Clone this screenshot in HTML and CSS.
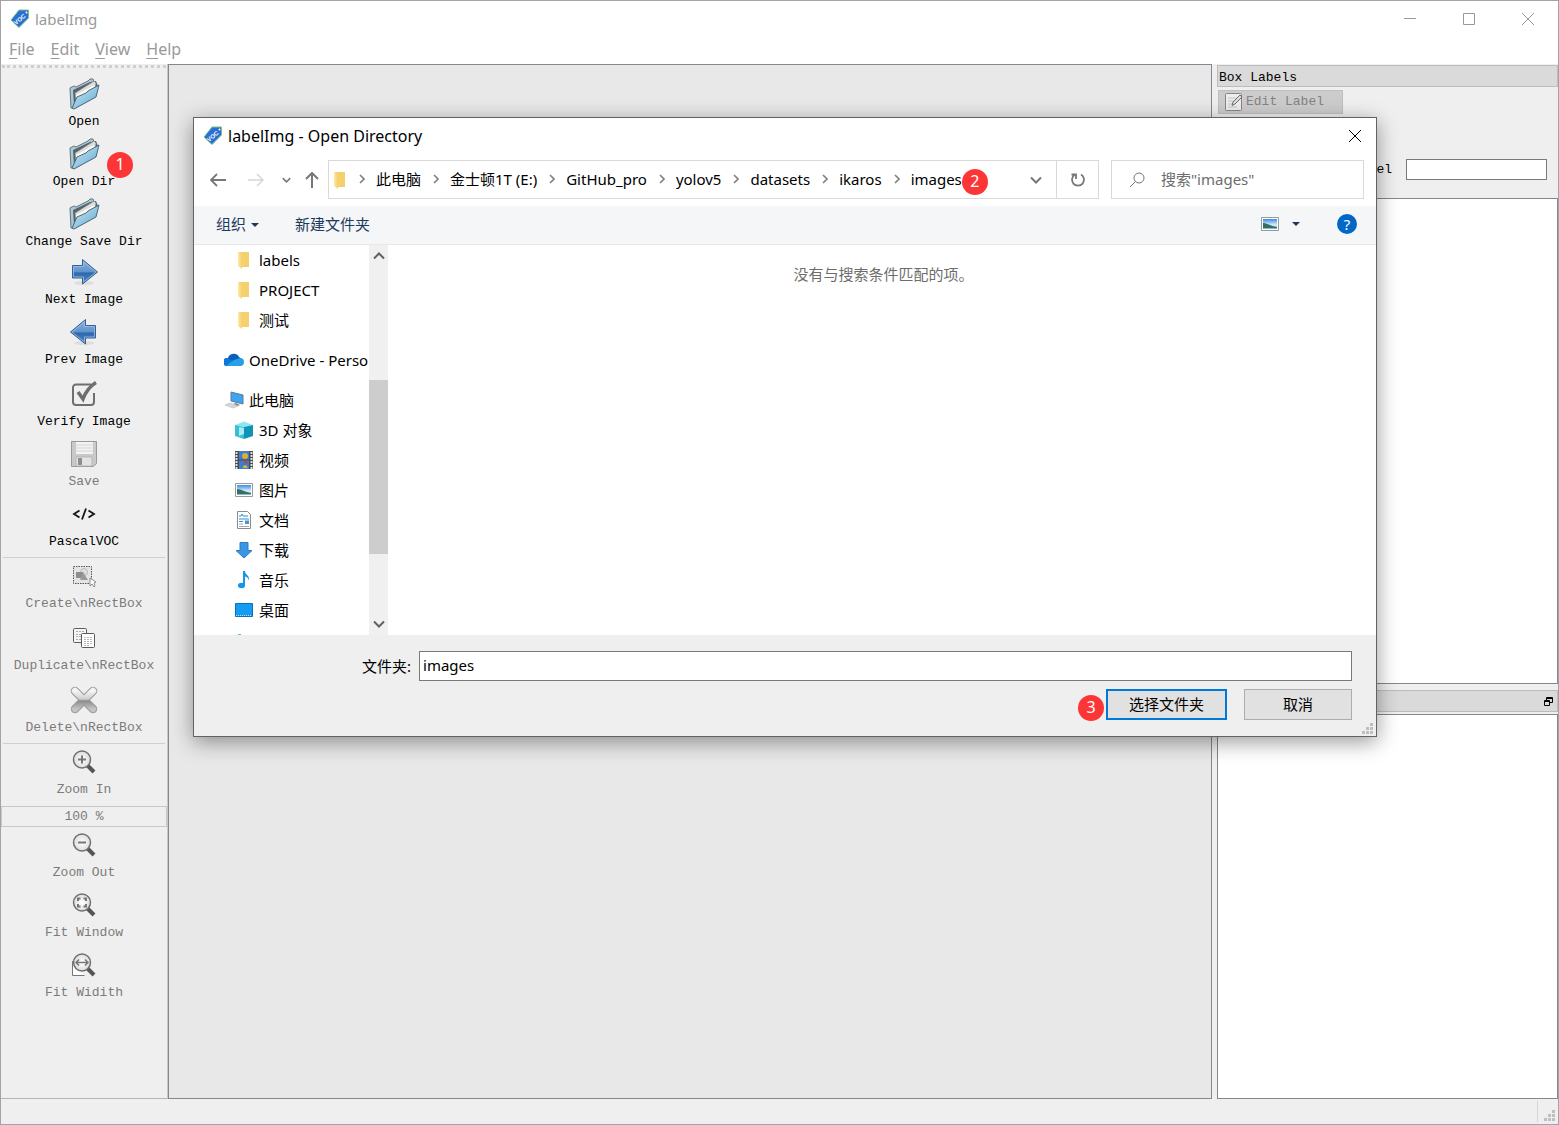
FILE: index.html
```html
<!DOCTYPE html>
<html lang="zh-CN">
<head>
<meta charset="utf-8">
<title>labelImg</title>
<link rel="stylesheet" href="styles.css">
</head>
<body>
<svg class="defs" aria-hidden="true">
  <defs>
    <linearGradient id="gBlue" x1="0" y1="0" x2="0" y2="1"><stop offset="0" stop-color="#8fb3dc"/><stop offset=".5" stop-color="#5f93cc"/><stop offset=".55" stop-color="#2e68ad"/><stop offset="1" stop-color="#4f8bc9"/></linearGradient>
    <linearGradient id="gFolder" x1="0" y1="0" x2="1" y2="1"><stop offset="0" stop-color="#d5eaf5"/><stop offset=".6" stop-color="#8cc3df"/><stop offset="1" stop-color="#5c9dc0"/></linearGradient>
    <linearGradient id="gGray" x1="0" y1="0" x2="0" y2="1"><stop offset="0" stop-color="#f4f4f4"/><stop offset=".45" stop-color="#cfcfcf"/><stop offset=".55" stop-color="#8c8c8c"/><stop offset="1" stop-color="#c4c4c4"/></linearGradient>
    <linearGradient id="gSky" x1="0" y1="0" x2="0" y2="1"><stop offset="0" stop-color="#3f8ae0"/><stop offset=".6" stop-color="#d9effb"/><stop offset="1" stop-color="#7fb0cc"/></linearGradient>
    <linearGradient id="gYellow" x1="0" y1="0" x2="1" y2="0"><stop offset="0" stop-color="#ffe9a6"/><stop offset="1" stop-color="#f5ce6a"/></linearGradient>
    <radialGradient id="gLens"><stop offset="0" stop-color="#fff"/><stop offset="1" stop-color="#dcdcdc"/></radialGradient>
    <symbol id="logo" viewBox="0 0 20 20"><path d="M9 1h9.500v8L9 18.500 1 11z" fill="#2a6fd2" stroke="#7fc08a" stroke-width="1"/><circle cx="16.500" cy="3.500" r="1" fill="#fff"/><text x="9.500" y="12.500" font-family="Liberation Sans, sans-serif" font-size="6" font-weight="700" fill="#fff" text-anchor="middle" transform="rotate(-40 9.500 10)">VOC</text></symbol>
    <symbol id="folder3d" viewBox="0 0 32 32"><path d="M2 10l4-2 2 1L20 3l2-2h3l1 3-2 8L6 30H3z" fill="#a9cbdc" stroke="#66757d"/><path d="M5 12L22 4l6-1 2 5-8 8L6 28z" fill="#596268"/><path d="M7 15L26 3l2 2-1 9L8 26z" fill="#dcdcda" stroke="#777" stroke-width=".6"/><path d="M8 17l18-10 1 3-18 14z" fill="#f9f9f7"/><path d="M4 30l5-11 9-4 2-2 11-6-3 12L6 31z" fill="url(#gFolder)" stroke="#48687a"/></symbol>
    <symbol id="next" viewBox="0 0 32 32"><ellipse cx="16" cy="27" rx="10" ry="2" fill="#dedede"/><path d="M4.500 9.500h10v-6L29.500 16l-15 12v-6h-10z" fill="url(#gBlue)" stroke="#345f96"/><path d="M5.500 10.500h10V6L28 16l-12.500 10v-5h-10z" fill="none" stroke="#9dbfe3" stroke-width=".8"/></symbol>
    <symbol id="verify" viewBox="0 0 32 32"><path d="M23 6.500H8a3 3 0 0 0-3 3V24a3 3 0 0 0 3 3h15a3 3 0 0 0 3-3v-9" fill="none" stroke="#6e6e6e" stroke-width="2"/><path d="M10 14l5 7Q19 10 28 4.500" fill="none" stroke="#6e6e6e" stroke-width="3.500"/></symbol>
    <symbol id="save" viewBox="0 0 32 32"><path d="M3.500 3.500h25v22l-3 3H3.500z" fill="#c9c9c9" stroke="#9a9a9a"/><path d="M8 4h17v12H8z" fill="#f3f3f3"/><path d="M8 7h17M8 10h17M8 13h17" stroke="#d5d5d5"/><path d="M8 19h16v9H8z" fill="#e3e3e3" stroke="#aaa" stroke-width=".7"/><path d="M10 20h4v7h-4z" fill="#8e8e8e"/></symbol>
    <symbol id="code" viewBox="0 0 32 32"><path d="M11.500 12.500L6 16l5.500 3.500M20.500 12.500L26 16l-5.500 3.500M18 10.500l-4 11" fill="none" stroke="#151515" stroke-width="1.800"/></symbol>
    <symbol id="create" viewBox="0 0 32 32"><path d="M5.500 6.500h18v17h-18z" fill="#e4e4e4" stroke="#555" stroke-dasharray="1.500 1"/><circle cx="16" cy="12" r="3.500" fill="#ddd" stroke="#bbb"/><path d="M8 12h7v6H8z" fill="#8d8d8d"/><path d="M15 12l5 8h-8z" fill="#999"/><path d="M22 18v8l2-2 2 3 1-1-1-3 2-1z" fill="#fff" stroke="#777" stroke-width=".8"/></symbol>
    <symbol id="dup" viewBox="0 0 32 32"><rect x="5.500" y="6.500" width="13" height="14" rx="1" fill="#f5f5f5" stroke="#5c5c5c"/><path d="M8 9.500h8M8 12.500h5M8 14.500h5M8 17.500h5" stroke="#aaa" stroke-dasharray="2 1"/><rect x="13.500" y="11.500" width="13" height="14" rx="1" fill="#fff" stroke="#5a5a5a"/><path d="M16 15.500h8M16 17.500h8M16 19.500h8M16 21.500h8M16 23.500h5" stroke="#bbb" stroke-dasharray="2 1"/></symbol>
    <symbol id="del" viewBox="0 0 32 32"><path d="M7 7l18 18M25 7L7 25" fill="none" stroke="#999" stroke-width="8.500" stroke-linecap="round"/><path d="M7 7l18 18M25 7L7 25" fill="none" stroke="url(#gGray)" stroke-width="6.500" stroke-linecap="round"/></symbol>
    <symbol id="lens" viewBox="0 0 32 32"><path d="M19 19l7 7" stroke="#555" stroke-width="4"/><circle cx="14" cy="13.500" r="8.500" fill="url(#gLens)" stroke="#707070" stroke-width="1.500"/></symbol>
    <symbol id="edit" viewBox="0 0 20 20"><rect x="1.500" y="1.500" width="16" height="17" rx="1" fill="#ededed" stroke="#858585"/><path d="M4 6h8M4 9h7M4 12h5M4 15h9" stroke="#c4c4c4"/><path d="M8 13.500L9 10l7-7 2 2-7 7z" fill="#ddd" stroke="#6d6d6d"/></symbol>
    <symbol id="folder" viewBox="0 0 14 18"><path d="M2 1h10v15H2z" fill="#f5d06e"/><path d="M1 1l4 2v15l-4-3z" fill="url(#gYellow)"/></symbol>
    <symbol id="cloud" viewBox="0 0 20 14"><path d="M4 13a4 4 0 0 1 0-8 6 6 0 0 1 11-1 5 5 0 0 1 1 9z" fill="#0a5fb8"/><path d="M3 5l7 3-7 5a4 4 0 0 1 0-8z" fill="#0f78d4"/><path d="M3 12l7-5 6-2a4 4 0 0 1 0 8H4z" fill="#28a0e8"/></symbol>
    <symbol id="pc" viewBox="0 0 20 18"><path d="M7 1l12 3v9L7 10z" fill="#3da5f0" stroke="#5b7c94"/><path d="M12 12l4 2-2 1-5-2z" fill="#888"/><path d="M1 14l5-2 8 3-5 2z" fill="#d3d8dc" stroke="#aab" stroke-width=".5"/></symbol>
    <symbol id="cube" viewBox="0 0 18 18"><path d="M0 4l9-3.500L18 4 9 6z" fill="#8ee6ee"/><path d="M0 4l9 2v12l-9-3z" fill="#36bfd2"/><path d="M18 4L9 6v12l9-3z" fill="#0e94b4"/><path d="M4 6l5 1v6l-5 2z" fill="#a5edf2"/></symbol>
    <symbol id="film" viewBox="0 0 18 18"><path d="M0 0h18v18H0z" fill="#4b4b4b"/><path d="M1.500 1v17M16.500 1v17" stroke="#ddd" stroke-width="2" stroke-dasharray="2 1"/><path d="M4 0h10v8.500H4zM4 9.500h10V18H4z" fill="#3d7cd6"/><circle cx="10" cy="5" r="3" fill="#d9b22c"/><path d="M10 10l3 1-2 2zM7 9h3v3z" fill="#d23b2a"/><path d="M8 15l3-1 2 3H8z" fill="#e3b31e"/></symbol>
    <symbol id="pic" viewBox="0 0 18 14"><path d="M.5.5h17v13H.5z" fill="#fff" stroke="#999"/><path d="M2 2h14v10H2z" fill="url(#gSky)"/><path d="M2 6c4 0 8 3 14 4v1H2z" fill="#33705f"/></symbol>
    <symbol id="doc" viewBox="0 0 18 18"><path d="M2.500.5h10l3 3v14h-13z" fill="#fff" stroke="#8b8b8b"/><path d="M4 8h10M4 10.500h4M4 5h2l1-2 1 2h5" stroke="#2f8fd6" fill="none"/><path d="M4 13h4M4 15.500h10" stroke="#aaa"/><path d="M10 9.500h4v3.500h-4z" fill="#4c92c9"/></symbol>
    <symbol id="down" viewBox="0 0 18 18"><path d="M5 1.500h8v8h4L9 17 1 9.500h4z" fill="#3b97e3" stroke="#2a7bc4"/></symbol>
    <symbol id="music" viewBox="0 0 18 18"><ellipse cx="6.500" cy="14.500" rx="3.500" ry="2.700" fill="#1596ea"/><path d="M8 0h2c0 4 5 4 4 10-.5-3-2-4-4-4.500V14H8z" fill="#1596ea"/></symbol>
    <symbol id="desk" viewBox="0 0 18 14"><path d="M.5.5h17v13H.5z" fill="#149cf3" stroke="#0c6fb4"/><path d="M1 12.500h16" stroke="#b9e2fb" stroke-dasharray="1 1"/></symbol>
    <symbol id="drive" viewBox="0 0 18 18"><path d="M3 3h3v3H3z" fill="#3fc4ea"/><path d="M1 8h16v5H1z" fill="#999"/></symbol>
    <symbol id="sep" viewBox="0 0 6 10"><path d="M1 1l4 4-4 4" fill="none" stroke="#808080" stroke-width="1.600"/></symbol>
    <symbol id="chevdown" viewBox="0 0 12 8"><path d="M1 1.500l5 5 5-5" fill="none" stroke="currentColor" stroke-width="2"/></symbol>
    <symbol id="grip" viewBox="0 0 12 12"><path d="M8 0h3v3H8zM4 4h3v3H4zM8 4h3v3H8zM0 8h3v3H0zM4 8h3v3H4zM8 8h3v3H8z" fill="#bfbfbf"/></symbol>
    <symbol id="cross" viewBox="0 0 14 14"><path d="M1 1l12 12M13 1L1 13" fill="none" stroke="currentColor"/></symbol>
  </defs>
</svg>

<div class="window">
  <header class="titlebar">
    <svg class="logo"><use href="#logo"/></svg>
    <span class="title">labelImg</span>
    <div class="caption">
      <button aria-label="Minimize"><svg width="14" height="14"><path d="M1 6.500h12" stroke="currentColor"/></svg></button>
      <button aria-label="Maximize"><svg width="14" height="14"><path d="M1.500 1.500h11v11h-11z" fill="none" stroke="currentColor"/></svg></button>
      <button aria-label="Close"><svg width="14" height="14"><use href="#cross"/></svg></button>
    </div>
  </header>
  <nav class="menubar">
    <button><u>F</u>ile</button><button><u>E</u>dit</button><button><u>V</u>iew</button><button><u>H</u>elp</button>
  </nav>

  <main class="workspace">
    <div class="toolbar">
      <div class="toolgrip"></div>
      <button class="tool"><svg><use href="#folder3d"/></svg>Open</button>
      <button class="tool"><svg><use href="#folder3d"/></svg>Open Dir<span class="badge badge-tool">1</span></button>
      <button class="tool"><svg><use href="#folder3d"/></svg>Change Save Dir</button>
      <button class="tool low"><svg><use href="#next"/></svg>Next Image</button>
      <button class="tool"><svg class="flip"><use href="#next"/></svg>Prev Image</button>
      <button class="tool high"><svg><use href="#verify"/></svg>Verify Image</button>
      <button class="tool" disabled><svg><use href="#save"/></svg>Save</button>
      <button class="tool"><svg><use href="#code"/></svg>PascalVOC</button>
      <hr>
      <button class="tool tight" disabled><svg><use href="#create"/></svg>Create\nRectBox</button>
      <button class="tool high" disabled><svg><use href="#dup"/></svg>Duplicate\nRectBox</button>
      <button class="tool high" disabled><svg><use href="#del"/></svg>Delete\nRectBox</button>
      <hr>
      <button class="tool tight" disabled><svg><use href="#lens"/><path d="M10 13.500h8M14 9.500v8" stroke="#777" stroke-width="2"/></svg>Zoom In</button>
      <input class="zoom" value="100 %" aria-label="Zoom" disabled>
      <button class="tool tight" disabled><svg><use href="#lens"/><path d="M10 13.500h8" stroke="#777" stroke-width="2"/></svg>Zoom Out</button>
      <button class="tool" disabled><svg><use href="#lens"/><path d="M10 12v-2.500h2.500M15.500 9.500H18V12M18 15v2.500h-2.500M12.500 17.500H10V15" fill="none" stroke="#777" stroke-width="2"/></svg>Fit Window</button>
      <button class="tool" disabled><svg><path d="M4.500 12v14.500h12" fill="#fff" stroke="#777"/><use href="#lens"/><path d="M8 13.500h12M11 10.500l-3 3 3 3M17 10.500l3 3-3 3" fill="none" stroke="#777" stroke-width="1.500"/></svg>Fit Widith</button>
    </div>
    <section class="canvas" aria-label="Canvas"></section>
    <aside class="docks">
      <h2 class="dockhead">Box Labels</h2>
      <div class="labeltools">
        <button class="editlabel" disabled><svg width="20" height="20"><use href="#edit"/></svg>Edit Label</button>
        <div class="defaultlabel">
          <label><input type="checkbox">Use default label</label>
          <input type="text" class="labelbox" aria-label="Default label">
        </div>
      </div>
      <div class="list boxlist"></div>
      <div class="dockhead filehead"><button aria-label="Float"><svg width="9" height="9"><path d="M2.500 3V.5h6v5H6M3 1.500h5M.5 3.500h5v5h-5zM1 4.500h4" fill="none" stroke="#000"/></svg></button></div>
      <div class="list filelist"></div>
    </aside>
  </main>
  <footer class="statusbar"><svg width="12" height="12"><use href="#grip"/></svg></footer>

  <section class="dialog" role="dialog" aria-label="labelImg - Open Directory">
    <header class="dlgtitle">
      <svg class="logo"><use href="#logo"/></svg><span>labelImg - Open Directory</span>
      <button aria-label="Close"><svg width="14" height="14"><use href="#cross"/></svg></button>
    </header>
    <div class="address">
      <div class="history">
        <button aria-label="Back"><svg width="16" height="14"><path d="M1 7h15M7 1L1 7l6 6" fill="none" stroke="#777" stroke-width="1.800"/></svg></button>
        <button aria-label="Forward"><svg width="16" height="14"><path d="M0 7h15M9 1l6 6-6 6" fill="none" stroke="#d6d6d6" stroke-width="1.500"/></svg></button>
        <button aria-label="Recent" class="gray"><svg width="9" height="6"><use href="#chevdown"/></svg></button>
        <button aria-label="Up"><svg width="14" height="16"><path d="M7 16V1M1 7l6-6 6 6" fill="none" stroke="#777" stroke-width="2"/></svg></button>
      </div>
      <div class="path">
        <svg width="14" height="18"><use href="#folder"/></svg>
        <ol>
          <li><svg><use href="#sep"/></svg><a href="#">此电脑</a></li>
          <li><svg><use href="#sep"/></svg><a href="#">金士顿1T (E:)</a></li>
          <li><svg><use href="#sep"/></svg><a href="#">GitHub_pro</a></li>
          <li><svg><use href="#sep"/></svg><a href="#">yolov5</a></li>
          <li><svg><use href="#sep"/></svg><a href="#">datasets</a></li>
          <li><svg><use href="#sep"/></svg><a href="#">ikaros</a></li>
          <li><svg><use href="#sep"/></svg><a href="#">images</a><span class="badge badge-path">2</span></li>
        </ol>
        <button class="drop gray" aria-label="Previous locations"><svg width="12" height="8"><use href="#chevdown"/></svg></button>
        <button class="refresh" aria-label="Refresh"><svg width="16" height="16"><path d="M11 2.500A6 6 0 1 1 5 2.500M1.500 2.500H6V7" fill="none" stroke="#777" stroke-width="1.800"/></svg></button>
      </div>
      <label class="search">
        <svg width="16" height="16"><circle cx="10" cy="6" r="5" fill="none" stroke="#777"/><path d="M6.500 9.500L1 15" stroke="#777"/></svg>
        <input type="text" placeholder='搜索"images"' aria-label="搜索">
      </label>
    </div>
    <div class="commands">
      <button>组织<i class="tri"></i></button><button>新建文件夹</button>
      <div class="views"><button aria-label="View"><svg width="18" height="14"><use href="#pic"/></svg><i class="tri"></i></button><button class="help" aria-label="Help">?</button></div>
    </div>
    <div class="browser">
      <div class="tree">
        <ul>
          <li class="sub"><svg><use href="#folder"/></svg>labels</li>
          <li class="sub"><svg><use href="#folder"/></svg>PROJECT</li>
          <li class="sub"><svg><use href="#folder"/></svg>测试</li>
        </ul>
        <ul><li><svg class="wide"><use href="#cloud"/></svg>OneDrive - Personal</li></ul>
        <ul>
          <li><svg class="wide"><use href="#pc"/></svg>此电脑</li>
          <li class="sub"><svg><use href="#cube"/></svg>3D 对象</li>
          <li class="sub"><svg><use href="#film"/></svg>视频</li>
          <li class="sub"><svg><use href="#pic"/></svg>图片</li>
          <li class="sub"><svg><use href="#doc"/></svg>文档</li>
          <li class="sub"><svg><use href="#down"/></svg>下载</li>
          <li class="sub"><svg><use href="#music"/></svg>音乐</li>
          <li class="sub"><svg><use href="#desk"/></svg>桌面</li>
          <li class="sub"><svg><use href="#drive"/></svg>Windows (C:)</li>
        </ul>
      </div>
      <div class="scroll">
        <svg class="flipv" width="12" height="8"><use href="#chevdown"/></svg>
        <div class="thumb"></div>
        <svg width="12" height="8"><use href="#chevdown"/></svg>
      </div>
      <p class="empty">没有与搜索条件匹配的项。</p>
    </div>
    <footer class="dlgfoot">
      <div class="field"><label for="folder-name">文件夹:</label><input id="folder-name" type="text" value="images"></div>
      <div class="actions">
        <button class="primary">选择文件夹<span class="badge badge-ok">3</span></button><button class="cancel">取消</button>
      </div>
      <svg class="dlggrip" width="12" height="12"><use href="#grip"/></svg>
    </footer>
  </section>
</div>
</body>
</html>
```
FILE: styles.css
```css
* { box-sizing: border-box; }
html, body { height: 100%; }
body {
  margin: 0;
  font: 15px/20px "Noto Sans", "Noto Sans CJK SC", sans-serif;
  color: #000;
}
button, input { font: inherit; color: inherit; }
button { background: none; border: 0; padding: 0; }
input { outline: 0; border-radius: 0; }
ul, ol { list-style: none; margin: 0; padding: 0; }
a { color: inherit; text-decoration: none; }
svg { display: block; flex: none; }
.defs { position: absolute; width: 0; height: 0; }

.window {
  position: relative;
  display: flex;
  flex-direction: column;
  min-height: 100%;
  border: 1px solid #a3a3a5;
  background: #efefef;
}
.logo { width: 20px; height: 20px; }

.titlebar {
  display: flex;
  align-items: center;
  gap: 5px;
  height: 36px;
  padding: 0 23px 0 9px;
  background: #fff;
  color: #999;
}
.caption { display: flex; gap: 45px; margin-left: auto; }
.menubar {
  display: flex;
  align-items: flex-start;
  gap: 16px;
  height: 27px;
  padding: 2px 8px;
  background: #fff;
  color: #999;
  font-size: 16px;
}
.menubar u { text-underline-offset: 3px; }

.workspace {
  display: flex;
  flex: 1;
  font: 13px/20px "Liberation Mono", monospace;
}
.toolbar {
  display: flex;
  flex-direction: column;
  width: 167px;
  border-right: 1px solid #c8c8c8;
  border-bottom: 1px solid #b5b5b5;
}
.toolgrip { height: 3px; margin: 1px 1px 4px; border-top: 3px dotted #cfcfcf; }
.tool {
  position: relative;
  display: flex;
  flex-direction: column;
  align-items: center;
  justify-content: flex-end;
  gap: 2px;
  height: 60px;
  white-space: nowrap;
}
.tool svg { width: 32px; height: 32px; }
.tool.low { height: 58px; }
.tool.high { height: 62px; }
.tool.tight { height: 56px; }
.tool:disabled { color: #7b7b7b; }
.flip { transform: scaleX(-1); }
.flipv { transform: scaleY(-1); }
.toolbar hr { width: 162px; margin: 5px 2px 0; border: 0; border-top: 1px solid #cfcfcf; }
.zoom {
  width: 100%;
  height: 21px;
  margin-top: 6px;
  padding: 0;
  border: 1px solid #c8c8c8;
  background: #efefef;
  color: #7b7b7b;
  text-align: center;
}

.canvas { flex: 1; border: 1px solid #828790; background: #e8e8e8; }
.docks { display: flex; flex-direction: column; width: 341px; margin-left: 5px; padding-top: 1px; }
.dockhead {
  height: 22px;
  margin: 0;
  padding: 0 1px;
  border: 1px solid #bcbcbc;
  background: #dadada;
  font-size: 13px;
  font-weight: 400;
  line-height: 24px;
}
.labeltools { height: 111px; padding: 3px 11px 0 1px; }
.editlabel {
  display: flex;
  align-items: center;
  gap: 2px;
  width: 125px;
  height: 24px;
  padding-left: 5px;
  border: 1px solid #bfbfbf;
  background: #ccc;
  color: #838383;
}
.defaultlabel {
  display: flex;
  justify-content: flex-end;
  align-items: center;
  gap: 14px;
  margin-top: 45px;
}
.defaultlabel label { display: flex; align-items: center; }
.labelbox { width: 141px; height: 21px; border: 1px solid #7a7a7a; background: #fff; }
.list { border: 1px solid #828790; background: #fff; }
.boxlist { height: 486px; }
.filehead { display: flex; justify-content: flex-end; align-items: center; margin: 6px 0 2px; padding: 0 4px; }
.filelist { flex: 1; }
.statusbar { display: flex; justify-content: flex-end; align-items: flex-end; height: 25px; padding: 2px; }
.statusbar::before { content: ""; height: 21px; margin-right: 6px; border-left: 1px solid #d5d5d5; }

.badge {
  position: absolute;
  width: 26px;
  height: 26px;
  border-radius: 50%;
  background: #fc3636;
  color: #fff;
  font: 16px/24px "Noto Sans", sans-serif;
  text-align: center;
}
.badge-tool { left: 106px; top: 20px; }
.badge-path { left: 100%; top: 0; }
.badge-ok { right: 100%; top: 4px; margin-right: 4px; }

.dialog {
  position: absolute;
  left: 192px;
  right: 181px;
  top: 116px;
  border: 1px solid #626262;
  background: #fff;
  box-shadow: 0 5px 20px rgba(0, 0, 0, .4);
}
.dlgtitle { display: flex; align-items: center; gap: 5px; height: 36px; padding: 0 14px 0 9px; font-size: 16px; }
.dlgtitle button { margin-left: auto; }
.address { display: flex; gap: 12px; height: 39px; margin: 6px 12px 7px 16px; }
.history { display: flex; align-items: center; gap: 22px; margin-right: -3px; }
.history button:nth-child(3) { margin: 0 -8px 0 -4px; }
.gray { color: #777; }
.path { display: flex; flex: 1; align-items: center; padding-left: 4px; border: 1px solid #d9d9d9; }
.path ol { display: flex; padding-bottom: 2px; }
.path li { position: relative; display: flex; align-items: center; white-space: nowrap; }
.path li svg { width: 6px; height: 10px; margin: 0 11px 0 12px; }
.drop { margin-left: auto; padding: 0 14px; }
.refresh { display: flex; align-items: center; justify-content: center; width: 42px; height: 37px; border-left: 1px solid #d9d9d9; }
.search { display: flex; align-items: center; width: 253px; padding-left: 17px; gap: 16px; border: 1px solid #d9d9d9; }
.search input { width: 100%; padding: 0 0 2px; border: 0; background: none; }
.search input::placeholder { color: #6d6d6d; opacity: 1; }
.commands {
  display: flex;
  align-items: center;
  gap: 36px;
  height: 39px;
  padding: 0 19px 2px 22px;
  border-bottom: 1px solid #e6e8ea;
  background: #f4f6f8;
  color: #1e395b;
}
.tri { display: inline-block; margin-left: 5px; border: 4px solid transparent; border-top-color: #1e395b; border-bottom: 0; vertical-align: 3px; }
.views { display: flex; align-items: center; gap: 37px; margin-left: auto; }
.views button:first-child { display: flex; align-items: center; gap: 8px; }
.views .help { width: 20px; height: 20px; border-radius: 50%; background: #0067c5; color: #fff; }
.browser { display: flex; height: 390px; }
.tree { width: 175px; overflow: hidden; }
.tree ul { margin-bottom: 10px; }
.tree li { display: flex; align-items: center; gap: 5px; height: 30px; padding-left: 30px; white-space: nowrap; }
.tree .sub { padding-left: 41px; gap: 6px; }
.tree svg { width: 18px; height: 18px; }
.tree svg.wide { width: 20px; }
.scroll { display: flex; flex-direction: column; align-items: center; justify-content: space-between; width: 19px; padding: 7px 0; background: #f0f0f0; color: #606060; }
.thumb { width: 100%; height: 174px; margin-top: 53px; background: #cdcdcd; }
.empty { flex: 1; margin: 19px 0 0 2px; border-left: 1px solid transparent; color: #6d6d6d; text-align: center; }
.dlgfoot { position: relative; height: 101px; padding: 16px 24px 0 168px; background: #efefef; }
.field { display: flex; align-items: center; gap: 8px; }
.field input { flex: 1; height: 30px; padding: 0 3px 3px; border: 1px solid #7a7a7a; background: #fff; }
.actions { display: flex; justify-content: flex-end; gap: 17px; margin-top: 8px; }
.actions button { position: relative; width: 108px; height: 31px; padding-bottom: 2px; border: 1px solid #adadad; background: #e1e1e1; }
.actions .primary { width: 121px; border: 2px solid #0078d7; }
.dlggrip { position: absolute; right: 2px; bottom: 1px; }
```
